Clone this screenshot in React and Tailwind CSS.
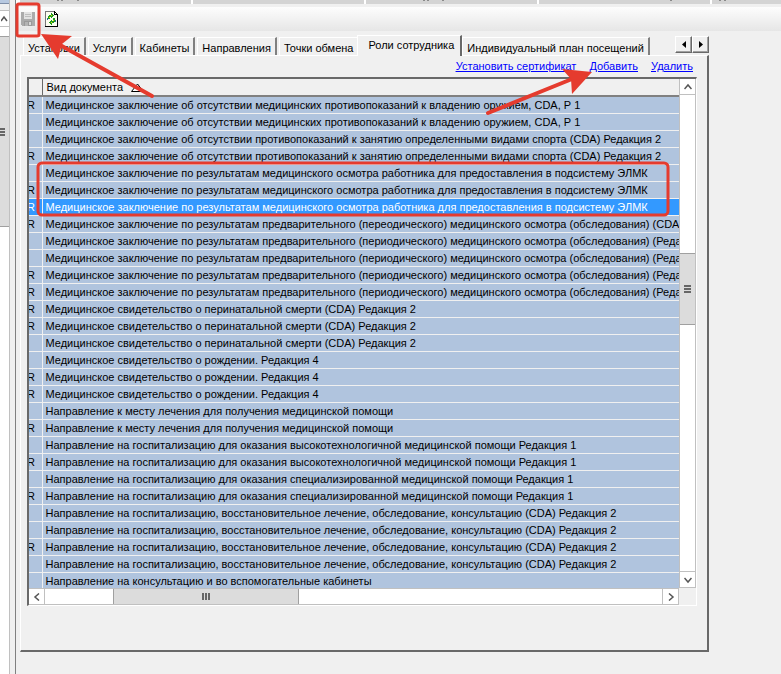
import React from "react";

const rows = [
  ["R", "Медицинское заключение об отсутствии медицинских противопоказаний к владению оружием, CDA, Р 1"],
  ["", "Медицинское заключение об отсутствии медицинских противопоказаний к владению оружием, CDA, Р 1"],
  ["", "Медицинское заключение об отсутствии противопоказаний к занятию определенными видами спорта (CDA) Редакция 2"],
  ["R", "Медицинское заключение об отсутствии противопоказаний к занятию определенными видами спорта (CDA) Редакция 2"],
  ["", "Медицинское заключение по результатам медицинского осмотра работника для предоставления в подсистему ЭЛМК"],
  ["R", "Медицинское заключение по результатам медицинского осмотра работника для предоставления в подсистему ЭЛМК"],
  ["R", "Медицинское заключение по результатам медицинского осмотра работника для предоставления в подсистему ЭЛМК", true],
  ["R", "Медицинское заключение по результатам предварительного (переодического) медицинского осмотра (обследования) (CDA"],
  ["", "Медицинское заключение по результатам предварительного (периодического) медицинского осмотра (обследования) (Реда"],
  ["", "Медицинское заключение по результатам предварительного (периодического) медицинского осмотра (обследования) (Реда"],
  ["R", "Медицинское заключение по результатам предварительного (периодического) медицинского осмотра (обследования) (Реда"],
  ["R", "Медицинское заключение по результатам предварительного (периодического) медицинского осмотра (обследования) (Реда"],
  ["R", "Медицинское свидетельство о перинатальной смерти (CDA) Редакция 2"],
  ["R", "Медицинское свидетельство о перинатальной смерти (CDA) Редакция 2"],
  ["", "Медицинское свидетельство о перинатальной смерти (CDA) Редакция 2"],
  ["", "Медицинское свидетельство о рождении. Редакция 4"],
  ["R", "Медицинское свидетельство о рождении. Редакция 4"],
  ["R", "Медицинское свидетельство о рождении. Редакция 4"],
  ["", "Направление к месту лечения для получения медицинской помощи"],
  ["R", "Направление к месту лечения для получения медицинской помощи"],
  ["", "Направление на госпитализацию для оказания высокотехнологичной медицинской помощи Редакция 1"],
  ["R", "Направление на госпитализацию для оказания высокотехнологичной медицинской помощи Редакция 1"],
  ["", "Направление на госпитализацию для оказания специализированной медицинской помощи Редакция 1"],
  ["R", "Направление на госпитализацию для оказания специализированной медицинской помощи Редакция 1"],
  ["", "Направление на госпитализацию, восстановительное лечение, обследование, консультацию (CDA) Редакция 2"],
  ["", "Направление на госпитализацию, восстановительное лечение, обследование, консультацию (CDA) Редакция 2"],
  ["R", "Направление на госпитализацию, восстановительное лечение, обследование, консультацию (CDA) Редакция 2"],
  ["", "Направление на госпитализацию, восстановительное лечение, обследование, консультацию (CDA) Редакция 2"],
  ["", "Направление на консультацию и во вспомогательные кабинеты"],
];

const tabsBefore = ["Установки", "Услуги", "Кабинеты", "Направления", "Точки обмена"];

function Tab({ label, active }) {
  return (
    <button
      role="tab"
      aria-selected={!!active}
      className={
        active
          ? "relative -mr-0.5 -mb-px -ml-1 h-[21px] shrink-0 border-t border-r-2 border-l border-t-white border-r-[#696969] border-l-white bg-[#f0f0f0] pr-1.5 pb-0.5 pl-2.5 whitespace-nowrap"
          : "h-[18px] shrink-0 border-t border-r-2 border-l border-t-white border-r-[#808080] border-l-white px-1 pt-[3px] whitespace-nowrap"
      }
    >
      {label}
    </button>
  );
}

function Chevron({ d, label, className }) {
  return (
    <button aria-label={label} className={"flex shrink-0 items-center justify-center border-[#c0c0c0] bg-white " + className}>
      <svg width="8" height="8" viewBox="0 0 8 8" fill="none" stroke="#555" strokeWidth="1.5">
        <path d={d} />
      </svg>
    </button>
  );
}

function SpinButton({ d, label }) {
  return (
    <button
      aria-label={label}
      className="flex h-[17px] w-[17px] items-center justify-center border border-t-white border-r-[#696969] border-b-[#696969] border-l-white bg-[#f0f0f0] shadow-[inset_-1px_-1px_0_#a0a0a0]"
    >
      <svg width="4" height="7" viewBox="0 0 4 7">
        <path d={d} fill="#000" />
      </svg>
    </button>
  );
}

function SaveIcon() {
  return (
    <svg width="14" height="14" viewBox="0 0 14 14" shapeRendering="crispEdges">
      <path d="M0 0H14V14H1L0 13Z" fill="#ababab" />
      <path d="M3 0H11V7H3Z" fill="#e2e2e2" />
      <path d="M4 2.5H10M4 4.5H10" stroke="#bdbdbd" />
      <path d="M3 9H11V14H3Z" fill="#9a9a9a" />
      <path d="M4 10H7V14H4Z" fill="#b4b4b4" />
      <path d="M8 10H10V13H8Z" fill="#d8d8d8" />
    </svg>
  );
}

function RefreshIcon() {
  return (
    <svg width="13" height="16" viewBox="0 0 13 16" shapeRendering="crispEdges">
      <path d="M0 0H10L13 3V16H0Z" fill="#fdfdf0" />
      <path d="M.5 15V.5H10" fill="none" stroke="#777" />
      <path d="M0 15.5H12.5V3" fill="none" stroke="#000" />
      <path d="M9 0H10V1H11V2H12V3H13V4H9Z" fill="#000" />
      <path d="M10 2H11V3H10Z" fill="#fff" />
      <path d="M3 8V5H4V4H6V2H7V3H8V4H9V5H8V6H7V7H6V6H5V8Z" fill="#1f9a1f" />
      <path d="M10 7V11H9V12H7V14H6V13H5V12H4V11H5V10H6V9H7V10H8V7Z" fill="#1f9a1f" />
      <path d="M4 6H5V7H4ZM6 4H7V5H6ZM8 9H9V10H8ZM6 11H7V12H6Z" fill="#e6e000" />
      <path d="M2 7H3V9H2ZM10 9H11V11H10Z" fill="#2b6f8f" />
    </svg>
  );
}

function HeaderCell({ className, marks }) {
  return (
    <div className={"bg-[#d4d4d4] " + className}>
      {marks && (
        <svg className="block" width="100%" height="4" fill="#8a8a8a">
          {marks.map((x) => (
            <rect key={x} x={x} width="2" height="1" />
          ))}
        </svg>
      )}
    </div>
  );
}

export default function App() {
  return (
    <div className="relative flex h-screen w-full overflow-hidden bg-[#f0f0f0] font-['Liberation_Sans',Arial,sans-serif] text-[11px] leading-[13px] text-black">
      <aside className="flex w-[10px] shrink-0 flex-col border-r border-[#c0c0c0] bg-white">
        <div className="h-1 shrink-0 border-b border-[#7f8fa8] bg-[#b8c9e0]" />
        <div className="h-1.5 shrink-0 bg-[#f0f0f0]" />
        <Chevron label="Вверх" d="M0 6L3 2L6 6" className="h-[17px] border-t border-b" />
        <div className="h-[9px] shrink-0" />
        <div className="flex h-[191px] shrink-0 flex-col justify-center gap-px border-t border-b border-[#a0a0a0] bg-[#dcdcdc]">
          <div className="h-0.5 w-[5px] bg-[#666]" />
          <div className="h-0.5 w-[5px] bg-[#666]" />
          <div className="h-0.5 w-[5px] bg-[#666]" />
        </div>
      </aside>
      <main className="ml-[5px] flex min-w-0 flex-1 flex-col border-l border-[#808080]">
        <div className="flex h-[5px] shrink-0 gap-0.5 border-b border-[#f0f0f0] bg-white pl-1">
          <HeaderCell className="w-[171px]" marks={[37, 41, 57]} />
          <HeaderCell className="w-[171px]" />
          <HeaderCell className="w-[171px]" marks={[57, 61, 76]} />
          <HeaderCell className="w-[171px]" marks={[131]} />
          <HeaderCell className="flex-1" marks={[7, 12]} />
        </div>
        <div className="mt-0.5 mb-px flex h-6 shrink-0 items-center gap-2.5 bg-linear-to-b from-[#fdfdfd] to-[#e6e6e6] pl-[5px]">
          <button aria-label="Сохранить"><SaveIcon /></button>
          <button aria-label="Обновить"><RefreshIcon /></button>
        </div>
        <div className="mr-[72px] ml-1 flex h-[23px] shrink-0 items-end">
          <div role="tablist" className="flex min-w-0 flex-1 items-end gap-0.5 pl-[3px]">
            {tabsBefore.map((t) => <Tab key={t} label={t} />)}
            <Tab label="Роли сотрудника" active />
            <Tab label="Индивидуальный план посещений" />
          </div>
          <div className="mb-0.5 flex">
            <SpinButton label="Назад" d="M4 0V7L0 3.500Z" />
            <SpinButton label="Вперёд" d="M0 0V7L4 3.500Z" />
          </div>
        </div>
        <section className="mr-[72px] ml-1 flex flex-col border-t border-r-2 border-b-2 border-l border-t-white border-r-[#696969] border-b-[#696969] border-l-white pr-2.5 pb-11 pl-1.5">
          <nav className="flex h-[21px] shrink-0 items-center justify-end gap-[13px] pr-1 text-[#0000ff] underline">
            <a href="#cert">Установить сертификат</a>
            <a href="#add">Добавить</a>
            <a href="#del">Удалить</a>
          </nav>
          <div className="border-t-2 border-r border-b border-l-2 border-t-[#696969] border-r-white border-b-white border-l-[#696969]">
            <div className="flex h-[509px]">
              <div className="min-w-0 flex-1 overflow-hidden">
                <table className="w-full table-fixed border-collapse">
                  <colgroup>
                    <col className="w-[13px]" />
                    <col />
                  </colgroup>
                  <thead>
                    <tr className="h-[17px] border-b-2 border-[#808080]">
                      <th aria-label="Код" className="border-r border-[#696969] p-0" />
                      <th className="p-0 pl-1 text-left font-normal">
                        <span className="flex items-center gap-2">
                          Вид документа
                          <svg width="13" height="9" viewBox="0 0 13 9" fill="#fff" stroke="#000"><path d="M.5 8.500L6.500 1L12.500 8.500Z" /></svg>
                        </span>
                      </th>
                    </tr>
                  </thead>
                  <tbody>
                    {rows.map(([code, name, selected], i) => (
                      <tr key={i} className={selected ? "h-[17px] border-b border-[#f0f0f0] bg-[#3399ff] text-white" : "h-[17px] border-b border-[#f0f0f0] bg-[#b0c4de]"}>
                        <td className="overflow-hidden border-r border-[#f0f0f0] p-0 pt-0.5"><span className="-ml-0.5">{code}</span></td>
                        <td className="overflow-hidden p-0 pt-0.5 pl-[3px] whitespace-nowrap">{name}</td>
                      </tr>
                    ))}
                  </tbody>
                </table>
              </div>
              <div className="flex w-[17px] shrink-0 flex-col border-r border-l border-[#c0c0c0] bg-white">
                <Chevron label="Вверх" d="M0.500 6L4 2L7.500 6" className="h-4 border-b" />
                <div className="h-[158px] shrink-0" />
                <div className="flex h-[72px] shrink-0 flex-col items-center justify-center gap-px border-t border-b border-[#a0a0a0] bg-[#dcdcdc]">
                  <div className="h-0.5 w-[7px] bg-[#666]" />
                  <div className="h-0.5 w-[7px] bg-[#666]" />
                  <div className="h-0.5 w-[7px] bg-[#666]" />
                </div>
                <div className="flex-1" />
                <Chevron label="Вниз" d="M0.500 2L4 6L7.500 2" className="h-[17px] border-t border-b" />
              </div>
            </div>
            <div className="mr-[17px] flex h-[17px] border-t border-b border-[#c0c0c0] bg-white">
              <Chevron label="Влево" d="M6 0.500L2 4L6 7.500" className="w-4 border-r" />
              <div className="w-[68px] shrink-0" />
              <div className="flex w-[186px] shrink-0 items-center justify-center gap-px border-r border-l border-[#a0a0a0] bg-[#dcdcdc]">
                <div className="h-[7px] w-0.5 bg-[#666]" />
                <div className="h-[7px] w-0.5 bg-[#666]" />
                <div className="h-[7px] w-0.5 bg-[#666]" />
              </div>
              <div className="flex-1" />
              <Chevron label="Вправо" d="M2 0.500L6 4L2 7.500" className="w-[17px] border-r border-l" />
            </div>
          </div>
        </section>
      </main>
      <svg className="pointer-events-none absolute top-0 left-0" width="781" height="674" fill="none" stroke="#e53b2e">
        <rect x="17" y="4" width="22" height="32" rx="2" strokeWidth="3" />
        <rect x="38" y="163" width="630" height="52" rx="4" strokeWidth="3" />
        <path d="M152 96L60 45M488 113L572 79" strokeWidth="4" strokeLinecap="round" />
        <path d="M41 34L72 36L62 44L58 59ZM592 72L562 69L571 79L572 94Z" fill="#e53b2e" stroke="none" />
      </svg>
    </div>
  );
}
